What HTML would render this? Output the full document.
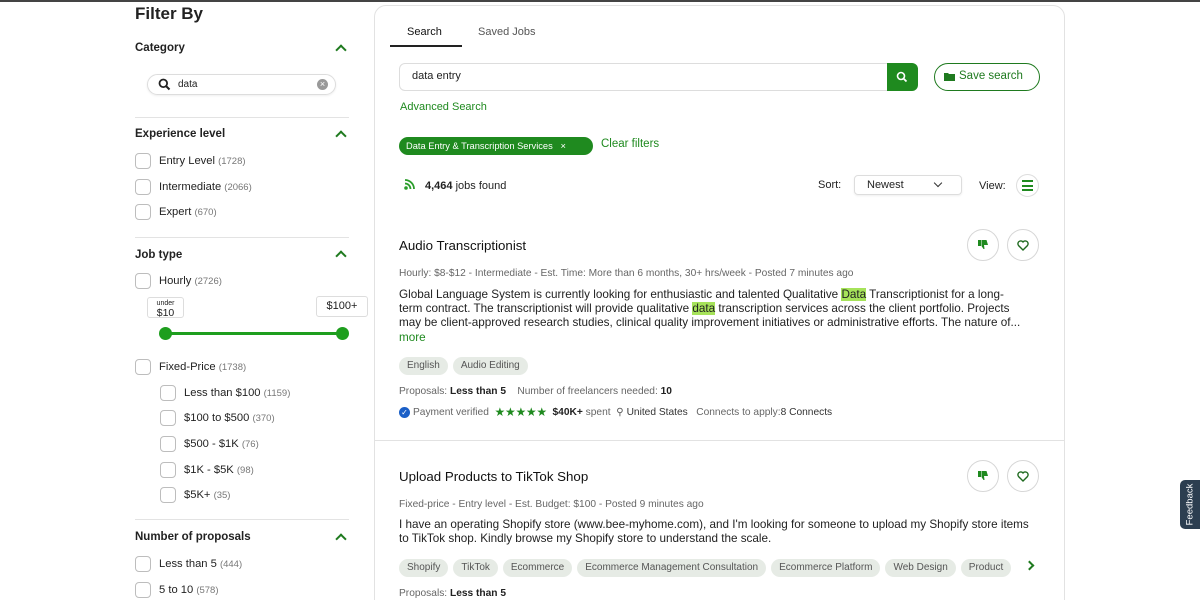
<!DOCTYPE html>
<html><head><meta charset="utf-8"><style>
*{margin:0;padding:0;box-sizing:border-box}
html,body{width:1200px;height:600px;overflow:hidden}
body{background:#fff;font-family:"Liberation Sans",Arial,sans-serif;color:#222;position:relative}
.a{position:absolute;white-space:nowrap}
.h{font-weight:bold;font-size:11.5px;color:#222}
.cb{position:absolute;width:16px;height:16px;border:1.5px solid #bdbdbd;border-radius:4px;background:#fff}
.lb{font-size:11.2px;color:#222}
.lb i{font-style:normal;color:#777;font-size:9.5px}
.chev{position:absolute;width:8px;height:8px;border-left:2px solid #1f7a1f;border-top:2px solid #1f7a1f;transform:rotate(45deg)}
.div{position:absolute;left:135px;width:214px;height:1px;background:#e3e3e3}
.tag{display:inline-block;height:18px;line-height:18px;padding:0 8px;border-radius:9px;background:#e6ebe5;font-size:10px;color:#555;margin-right:5px}
.circ{position:absolute;width:32px;height:32px;border:1.5px solid #d7d7d7;border-radius:50%;display:flex;align-items:center;justify-content:center}
.meta{font-size:10.2px;color:#666}
.desc{font-size:11.7px;color:#222;line-height:14.2px}
mark{background:#a6e35a;color:#222}
</style></head><body>
<div class="a" style="left:0;top:0;width:1200px;height:2px;background:#444"></div>

<!-- sidebar -->
<div class="a" style="left:135px;top:4px;font-size:17px;font-weight:bold;line-height:20px">Filter By</div>
<div class="a h" style="left:135px;top:42px">Category</div>
<div class="chev" style="left:337px;top:46px"></div>
<div class="a" style="left:147px;top:74px;width:189px;height:21px;border:1px solid #ddd;border-radius:11px;box-shadow:0 1px 2px #eee"></div>
<svg class="a" style="left:158px;top:78px" width="13" height="13" viewBox="0 0 13 13"><circle cx="5.3" cy="5.3" r="3.8" fill="none" stroke="#222" stroke-width="1.8"/><path d="M8 8l3.5 3.5" stroke="#222" stroke-width="2"/></svg>
<div class="a" style="left:178px;top:79px;font-size:10px">data</div>
<div class="a" style="left:317px;top:79px;width:11px;height:11px;border-radius:50%;background:#999;color:#fff;font-size:9px;line-height:11px;text-align:center">×</div>
<div class="div" style="top:117px"></div>
<div class="a h" style="left:135px;top:128px">Experience level</div>
<div class="chev" style="left:337px;top:132px"></div>
<div class="cb" style="left:135px;top:153px"></div><div class="a lb" style="left:159px;top:155px">Entry Level <i>(1728)</i></div>
<div class="cb" style="left:135px;top:179px"></div><div class="a lb" style="left:159px;top:181px">Intermediate <i>(2066)</i></div>
<div class="cb" style="left:135px;top:204px"></div><div class="a lb" style="left:159px;top:206px">Expert <i>(670)</i></div>
<div class="div" style="top:237px"></div>
<div class="a h" style="left:135px;top:249px">Job type</div>
<div class="chev" style="left:337px;top:252px"></div>
<div class="cb" style="left:135px;top:273px"></div><div class="a lb" style="left:159px;top:275px">Hourly <i>(2726)</i></div>
<div class="a" style="left:147px;top:297px;width:37px;height:21px;border:1px solid #ddd;border-radius:3px;text-align:center;line-height:8px"><div style="font-size:7px;margin-top:2px">under</div><div style="font-size:10.5px;line-height:11px">$10</div></div>
<div class="a" style="left:316px;top:296px;width:52px;height:21px;border:1px solid #ddd;border-radius:3px;text-align:center;font-size:11px;line-height:19px">$100+</div>
<div class="a" style="left:166px;top:332px;width:176px;height:3px;background:#1e9e1e"></div>
<div class="a" style="left:159px;top:327px;width:13px;height:13px;border-radius:50%;background:#1e9e1e"></div>
<div class="a" style="left:336px;top:327px;width:13px;height:13px;border-radius:50%;background:#1e9e1e"></div>
<div class="cb" style="left:135px;top:359px"></div><div class="a lb" style="left:159px;top:361px">Fixed-Price <i>(1738)</i></div>
<div class="cb" style="left:160px;top:385px"></div><div class="a lb" style="left:184px;top:387px">Less than $100 <i>(1159)</i></div>
<div class="cb" style="left:160px;top:410px"></div><div class="a lb" style="left:184px;top:412px">$100 to $500 <i>(370)</i></div>
<div class="cb" style="left:160px;top:436px"></div><div class="a lb" style="left:184px;top:438px">$500 - $1K <i>(76)</i></div>
<div class="cb" style="left:160px;top:462px"></div><div class="a lb" style="left:184px;top:464px">$1K - $5K <i>(98)</i></div>
<div class="cb" style="left:160px;top:487px"></div><div class="a lb" style="left:184px;top:489px">$5K+ <i>(35)</i></div>
<div class="div" style="top:519px"></div>
<div class="a h" style="left:135px;top:531px">Number of proposals</div>
<div class="chev" style="left:337px;top:535px"></div>
<div class="cb" style="left:135px;top:556px"></div><div class="a lb" style="left:159px;top:558px">Less than 5 <i>(444)</i></div>
<div class="cb" style="left:135px;top:582px"></div><div class="a lb" style="left:159px;top:584px">5 to 10 <i>(578)</i></div>

<!-- main card -->
<div class="a" style="left:374px;top:5px;width:691px;height:620px;border:1px solid #e2e2e2;border-radius:12px"></div>
<div class="a" style="left:407px;top:26px;font-size:11px;color:#111">Search</div>
<div class="a" style="left:478px;top:26px;font-size:11px;color:#555">Saved Jobs</div>
<div class="a" style="left:390px;top:45px;width:72px;height:2px;background:#222"></div>
<div class="a" style="left:399px;top:63px;width:490px;height:28px;border:1px solid #ddd;border-radius:6px 0 0 6px"></div>
<div class="a" style="left:412px;top:70px;font-size:11px">data entry</div>
<div class="a" style="left:887px;top:63px;width:31px;height:28px;border-radius:0 6px 6px 0;background:#1f8a1f"></div>
<svg class="a" style="left:896px;top:71px" width="12" height="12" viewBox="0 0 12 12"><circle cx="5" cy="5" r="3.5" fill="none" stroke="#fff" stroke-width="1.6"/><path d="M7.5 7.5l3 3" stroke="#fff" stroke-width="1.8"/></svg>
<div class="a" style="left:934px;top:63px;width:106px;height:28px;border:1.5px solid #1f7a1f;border-radius:14px"></div>
<svg class="a" style="left:944px;top:72px" width="11" height="9" viewBox="0 0 11 9"><path d="M0 1h4l1 1h6v7H0z" fill="#1f7a1f"/></svg>
<div class="a" style="left:959px;top:69px;font-size:11.5px;line-height:14px;color:#1f7a1f">Save search</div>
<div class="a" style="left:400px;top:101px;font-size:11px;color:#1f8a1f">Advanced Search</div>
<div class="a" style="left:399px;top:137px;width:194px;height:18px;border-radius:9px;background:#1f8a1f;color:#fff;font-size:9.3px;line-height:18px;padding-left:7px">Data Entry &amp; Transcription Services&nbsp;&nbsp; ×</div>
<div class="a" style="left:601px;top:138px;font-size:11.5px;color:#1f8a1f">Clear filters</div>
<svg class="a" style="left:404px;top:179px" width="12" height="11" viewBox="0 0 12 11"><circle cx="2" cy="9" r="1.8" fill="#2a9d2a"/><path d="M1 4.5a5.5 5.5 0 0 1 5.5 5.5M1 1a9 9 0 0 1 9 9" fill="none" stroke="#2a9d2a" stroke-width="1.8"/></svg>
<div class="a" style="left:425px;top:180px;font-size:11px"><b>4,464</b> jobs found</div>
<div class="a" style="left:818px;top:179px;font-size:11px">Sort:</div>
<div class="a" style="left:854px;top:175px;width:108px;height:20px;border:1px solid #ddd;border-radius:4px;box-shadow:0 1px 2px #eee"></div>
<div class="a" style="left:867px;top:179px;font-size:11px">Newest</div>
<div class="a" style="left:935px;top:180px;width:6px;height:6px;border-right:1.5px solid #333;border-bottom:1.5px solid #333;transform:rotate(45deg)"></div>
<div class="a" style="left:979px;top:180px;font-size:11px">View:</div>
<div class="a" style="left:1016px;top:174px;width:23px;height:23px;border:1.5px solid #ddd;border-radius:50%"></div>
<div class="a" style="left:1022px;top:180px;width:11px;height:11px;border-top:2px solid #1f8a1f;border-bottom:2px solid #1f8a1f"><div style="margin-top:2.5px;height:2px;background:#1f8a1f"></div></div>

<!-- job 1 -->
<div class="a" style="left:399px;top:238px;font-size:13.3px;color:#111">Audio Transcriptionist</div>
<div class="circ" style="left:967px;top:229px"><svg width="12" height="12" viewBox="0 0 12 12"><path d="M1 1h3v6H1zM4.5 1h5l1.5 5h-4l.5 4h-1l-2-3z" fill="#1f8a1f"/></svg></div>
<div class="circ" style="left:1007px;top:229px"><svg width="12" height="11" viewBox="0 0 12 11"><path d="M6 10L1.5 5.5A2.6 2.6 0 0 1 6 2a2.6 2.6 0 0 1 4.5 3.5z" fill="none" stroke="#1f6a1f" stroke-width="1.4"/></svg></div>
<div class="a meta" style="left:399px;top:268px">Hourly: $8-$12 - Intermediate - Est. Time: More than 6 months, 30+ hrs/week - Posted 7 minutes ago</div>
<div class="a desc" style="left:399px;top:288px">Global Language System is currently looking for enthusiastic and talented Qualitative <mark>Data</mark> Transcriptionist for a long-<br>term contract. The transcriptionist will provide qualitative <mark>data</mark> transcription services across the client portfolio. Projects<br>may be client-approved research studies, clinical quality improvement initiatives or administrative efforts. The nature of...<br><span style="color:#1f8a1f">more</span></div>
<div class="a" style="left:399px;top:355px"><span class="tag">English</span><span class="tag">Audio Editing</span></div>
<div class="a meta" style="left:399px;top:386px">Proposals: <b style="color:#222">Less than 5</b>&nbsp;&nbsp;&nbsp; Number of freelancers needed: <b style="color:#222">10</b></div>
<div class="a meta" style="left:399px;top:405px;display:flex;align-items:center"><span style="display:inline-block;width:11px;height:11px;border-radius:50%;background:#1a5fc7;color:#fff;font-size:8px;line-height:11px;text-align:center;margin-right:3px">✓</span>Payment verified&nbsp;&nbsp;<span style="color:#1f8a1f;font-size:12px;letter-spacing:-0.3px">★★★★★</span>&nbsp;&nbsp;<b style="color:#222">$40K+</b>&nbsp;spent&nbsp;&nbsp;<span style="color:#555">⚲</span>&nbsp;<span style="color:#333">United States</span>&nbsp;&nbsp;&nbsp;Connects to apply: <span style="color:#333">8 Connects</span></div>
<div class="a" style="left:375px;top:440px;width:689px;height:1px;background:#e2e2e2"></div>

<!-- job 2 -->
<div class="a" style="left:399px;top:469px;font-size:13.3px;color:#111">Upload Products to TikTok Shop</div>
<div class="circ" style="left:967px;top:460px"><svg width="12" height="12" viewBox="0 0 12 12"><path d="M1 1h3v6H1zM4.5 1h5l1.5 5h-4l.5 4h-1l-2-3z" fill="#1f8a1f"/></svg></div>
<div class="circ" style="left:1007px;top:460px"><svg width="12" height="11" viewBox="0 0 12 11"><path d="M6 10L1.5 5.5A2.6 2.6 0 0 1 6 2a2.6 2.6 0 0 1 4.5 3.5z" fill="none" stroke="#1f6a1f" stroke-width="1.4"/></svg></div>
<div class="a meta" style="left:399px;top:499px">Fixed-price - Entry level - Est. Budget: $100 - Posted 9 minutes ago</div>
<div class="a desc" style="left:399px;top:518px">I have an operating Shopify store (www.bee-myhome.com), and I'm looking for someone to upload my Shopify store items<br>to TikTok shop. Kindly browse my Shopify store to understand the scale.</div>
<div class="a" style="left:399px;top:557px;width:620px;overflow:hidden"><span class="tag">Shopify</span><span class="tag">TikTok</span><span class="tag">Ecommerce</span><span class="tag">Ecommerce Management Consultation</span><span class="tag">Ecommerce Platform</span><span class="tag">Web Design</span><span class="tag">Product</span></div>
<div class="a" style="left:1026px;top:562px;width:7px;height:7px;border-right:2px solid #1f7a1f;border-top:2px solid #1f7a1f;transform:rotate(45deg)"></div>
<div class="a meta" style="left:399px;top:588px">Proposals: <b style="color:#222">Less than 5</b></div>

<!-- feedback -->
<div class="a" style="left:1180px;top:480px;width:22px;height:49px;background:#2c3e50;border-radius:5px 0 0 5px"></div>
<div class="a" style="left:1180px;top:480px;width:20px;height:49px;display:flex;align-items:center;justify-content:center"><span style="transform:rotate(-90deg);color:#fff;font-size:9.5px">Feedback</span></div>
</body></html>
